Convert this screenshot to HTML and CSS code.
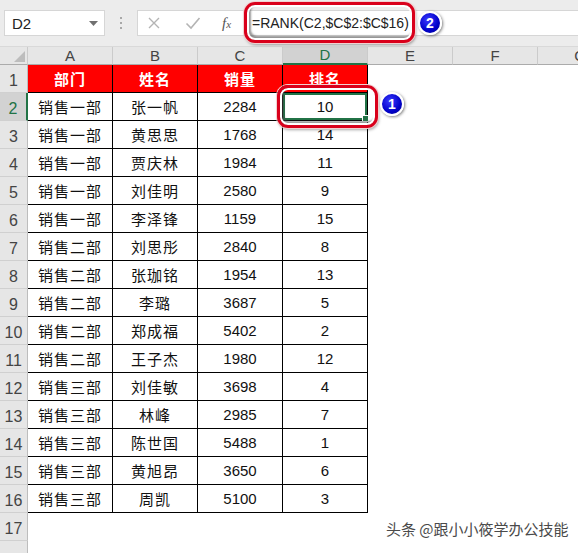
FILE: index.html
```html
<!DOCTYPE html>
<html lang="zh-CN">
<head>
  <meta charset="UTF-8" />
  <title>RANK 排名</title>
  <link rel="stylesheet" href="styles.css">
</head>
<body>
  <div class="topbar">
    <div class="namebox">
      <span>D2</span>
      <svg class="drop" width="9" height="5" viewBox="0 0 9 5"><path d="M0 0h9L4.5 5z" fill="#707070"/></svg>
    </div>
    <div class="dots"><i></i><i></i><i></i></div>
    <div class="formula">
      <svg class="ico" width="14" height="14" viewBox="0 0 14 14"><path d="M2 2l10 10M12 2L2 12" stroke="#b4b4b4" stroke-width="1.4" fill="none"/></svg>
      <svg class="ico ok" width="16" height="14" viewBox="0 0 16 14"><path d="M1.5 7.5l4.5 4.5L14.5 2" stroke="#b4b4b4" stroke-width="1.6" fill="none"/></svg>
      <span class="fx">f<small>x</small></span>
      <span class="ftext">=RANK(C2,$C$2:$C$16)</span>
    </div>
  </div>

  <table class="sheet">
    <colgroup>
      <col class="rh"><col><col><col><col><col><col><col>
    </colgroup>
    <thead>
      <tr>
        <th class="corner"><svg width="11" height="11" viewBox="0 0 11 11"><path d="M11 0v11H0z" fill="#bdbdbd"/></svg></th>
        <th>A</th><th>B</th><th>C</th><th class="sel">D</th><th>E</th><th>F</th><th>G</th>
      </tr>
    </thead>
    <tbody id="rows"></tbody>
  </table>

  <div class="callout c-formula"></div>
  <div class="callout c-cell"></div>
  <div class="badge b-two">2</div>
  <div class="badge b-one">1</div>

  <div class="mark">头条 @跟小小筱学办公技能</div>

  <script>
    const data = [
      ['销售一部', '张一帆', 2284, 10],
      ['销售一部', '黄思思', 1768, 14],
      ['销售一部', '贾庆林', 1984, 11],
      ['销售一部', '刘佳明', 2580, 9],
      ['销售一部', '李泽锋', 1159, 15],
      ['销售二部', '刘思彤', 2840, 8],
      ['销售二部', '张珈铭', 1954, 13],
      ['销售二部', '李璐', 3687, 5],
      ['销售二部', '郑成福', 5402, 2],
      ['销售二部', '王子杰', 1980, 12],
      ['销售三部', '刘佳敏', 3698, 4],
      ['销售三部', '林峰', 2985, 7],
      ['销售三部', '陈世国', 5488, 1],
      ['销售三部', '黄旭昂', 3650, 6],
      ['销售三部', '周凯', 5100, 3]
    ];

    const body = document.getElementById('rows');
    let html = `<tr><th class="num">1</th>
      <td class="hd">部门</td><td class="hd">姓名</td><td class="hd">销量</td><td class="hd">排名</td>
      <td></td><td></td><td></td></tr>`;

    data.forEach((r, i) => {
      const n = i + 2;
      html += `<tr><th class="num${n === 2 ? ' sel' : ''}">${n}</th>
        <td class="cell zh">${r[0]}</td>
        <td class="cell zh">${r[1]}</td>
        <td class="cell">${r[2]}</td>
        <td class="cell${n === 2 ? ' active' : ''}">${r[3]}</td>
        <td></td><td></td><td></td></tr>`;
    });

    // row 18 sits mostly below the frame, its label is not visible
    html += `<tr><th class="num">17</th><td></td><td></td><td></td><td></td><td></td><td></td><td></td></tr>`;
    html += `<tr><th class="num"></th><td></td><td></td><td></td><td></td><td></td><td></td><td></td></tr>`;
    body.innerHTML = html;
  </script>
</body>
</html>
```

FILE: styles.css
```css
html, body { margin: 0; padding: 0; }
body {
  width: 578px; height: 553px; overflow: hidden; position: relative;
  background: #fff; font-family: "Liberation Sans", Arial, "Noto Sans CJK SC", sans-serif; color: #000;
}

/* formula bar */
.topbar {
  height: 47px; background: #ececec; border-bottom: 1px solid #d9d9d9;
  display: flex; align-items: flex-start; padding-top: 10px; box-sizing: border-box;
}
.namebox {
  margin-left: 4px; width: 101px; height: 26px; box-sizing: border-box;
  background: #fff; border: 1px solid #d6d6d6;
  display: flex; align-items: center; justify-content: space-between; padding: 0 6px 0 7px;
  font-size: 15px; color: #222;
}
.dots {
  width: 32px; height: 26px; display: flex; flex-direction: column; align-items: center; justify-content: center; gap: 3px;
}
.dots i { width: 2px; height: 2px; background: #a8a8a8; display: block; }
.formula {
  flex: 1; height: 26px; box-sizing: border-box; background: #fff;
  border: 1px solid #d6d6d6; border-right: none;
  display: flex; align-items: center; padding-left: 9px;
}
.ico { margin-right: 24px; }
.ok { margin-right: 21px; }
.fx {
  font-family: "Liberation Serif", serif; font-style: italic; font-size: 15px; color: #555; width: 30px;
}
.fx small { font-size: 11px; }
.ftext { font-size: 14px; color: #222; margin-left: 0; }

/* sheet */
.sheet {
  table-layout: fixed; width: 623px; border-collapse: separate; border-spacing: 0;
}
.sheet col { width: 85px; }
.sheet col.rh { width: 28px; }
.sheet thead th {
  height: 18px; padding: 0; box-sizing: border-box; background: #e6e6e6;
  border-right: 1px solid #cbcbcb; border-bottom: 1px solid #ababab;
  font-weight: normal; font-size: 15px; color: #444; line-height: 16px;
}
.sheet thead th.sel { background: #d2d2d2; color: #217346; border-bottom: 2px solid #217346; }
.corner { text-align: right; vertical-align: bottom; }
.corner svg { display: block; margin: 0 2px 2px auto; }
.sheet tbody tr { height: 28px; }
.sheet td { padding: 0; text-align: center; font-size: 15px; }
.num {
  background: #e6e6e6; padding: 0 0 2px 0; vertical-align: bottom;
  border-right: 1px solid #bdbdbd; border-bottom: 1px solid #d0d0d0;
  font-weight: normal; font-size: 16px; color: #444; text-align: center;
}
.num.sel { background: #d2d2d2; border-right: 2px solid #217346; color: #217346; }
.hd {
  background: #ff0000; color: #fff; font-weight: bold;
  font-family: "Noto Sans CJK SC", sans-serif; letter-spacing: 1px;
  border-right: 1px solid #000; border-bottom: 1px solid #000;
}
.cell { border-right: 1px solid #000; border-bottom: 1px solid #000; color: #111; }
.zh { font-family: "Noto Sans CJK SC", sans-serif; letter-spacing: 1px; }
.active { position: relative; box-shadow: inset 0 0 0 2px #217346; }
.active::after {
  content: ""; position: absolute; right: -2px; bottom: -2px; width: 5px; height: 5px;
  background: #217346; border: 1px solid #fff;
}

/* annotations */
.callout {
  position: absolute; box-sizing: border-box; border: 3px solid #d9001b; border-radius: 11px;
  box-shadow: 0 0 0 1px #f2d0d0, 1px 2px 3px rgba(0,0,0,.35), inset 0 0 0 2px #fff, inset 2px -2px 2px 2px rgba(70,70,70,.55);
}
.c-formula { left: 244px; top: 2px; width: 171px; height: 41px; }
.c-cell { left: 277px; top: 85px; width: 101px; height: 43px; }
.badge {
  position: absolute; width: 20px; height: 20px; border-radius: 50%;
  background: radial-gradient(circle at 40% 35%, #3a3aff, #0000c8 60%, #00008a);
  border: 2px solid #fff; box-shadow: 1px 1px 3px rgba(0,0,0,.5);
  color: #fff; font-weight: bold; font-size: 14px; line-height: 20px; text-align: center;
}
.b-two { left: 418px; top: 11px; }
.b-one { left: 380px; top: 92px; }

.mark {
  position: absolute; left: 386px; top: 518px;
  font-family: "Noto Sans CJK SC", sans-serif; font-size: 15px; color: #4a4a4a;
  text-shadow: 0 0 2px #fff, 0 0 2px #fff;
}
```
